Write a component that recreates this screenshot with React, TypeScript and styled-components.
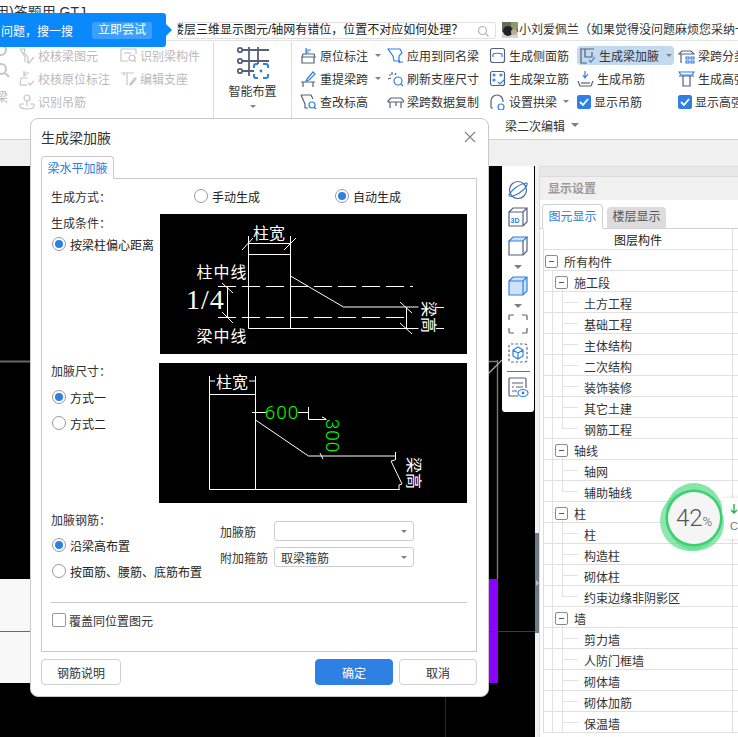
import React from "react";
import styled, { createGlobalStyle } from "styled-components";

const GlobalStyle = createGlobalStyle`
  html, body { margin: 0; padding: 0; background: #fff; }
  body { font-family: "Liberation Sans", "Noto Sans CJK SC", sans-serif; font-size: 12px; color: #333; }
`;

const Page = styled.div`
  position: relative;
  width: 738px;
  height: 737px;
  overflow: hidden;
  display: flex;
  flex-direction: column;
  background: #fff;
`;

/* ---------- top strip ---------- */
const TitleBar = styled.div`
  height: 13px;
  overflow: hidden;
  padding-top: 3px;
  box-sizing: border-box;
  font-size: 14px;
  line-height: 18px;
  white-space: nowrap;
  text-indent: -5px;
`;

const SearchStrip = styled.div`
  height: 27px;
  box-sizing: border-box;
  padding: 9px 0 0 177px;
  display: flex;
  align-items: flex-start;
  white-space: nowrap;
  overflow: hidden;
`;

const TipBubble = styled.div`
  position: absolute;
  left: 0;
  top: 13px;
  width: 166px;
  height: 34px;
  background: #0989fb;
  border-radius: 0 3px 3px 0;
  color: #fff;
  display: flex;
  align-items: center;
  z-index: 3;
  &::after {
    content: "";
    position: absolute;
    left: 166px;
    top: 11px;
    border-left: 6px solid #0989fb;
    border-top: 6px solid transparent;
    border-bottom: 6px solid transparent;
  }
`;

const TipText = styled.span`
  width: 92px;
  flex: none;
  padding-left: 1px;
  box-sizing: border-box;
`;

const TipButton = styled.span`
  width: 60px;
  height: 17px;
  line-height: 17px;
  text-align: center;
  background: rgba(255, 255, 255, 0.2);
  border-radius: 2px;
`;

const SearchBox = styled.div`
  width: 319px;
  height: 17px;
  flex: none;
  box-sizing: border-box;
  border: 1px solid #e0e0e0;
  border-radius: 2px;
  display: flex;
  align-items: center;
  justify-content: space-between;
  padding-right: 6px;
  overflow: hidden;
  color: #222;
`;

const SearchText = styled.span`
  margin-left: -6px;
  line-height: 15px;
`;

const Avatar = styled.svg`
  width: 16px;
  height: 16px;
  flex: none;
  margin-left: 6px;
`;

const NoticeText = styled.span`
  margin-left: 1px;
  line-height: 16px;
`;

/* ---------- ribbon ---------- */
const Ribbon = styled.div`
  height: 100px;
  box-sizing: border-box;
  border-top: 1px solid #e4e4e4;
  border-bottom: 1px solid #cfcfcf;
  display: flex;
  flex-direction: column;
`;

const RibbonTools = styled.div`
  height: 77px;
  display: flex;
  overflow: hidden;
`;

const ToolColumn = styled.div<{ $w: number; $ml?: number }>`
  width: ${(p) => p.$w}px;
  margin-left: ${(p) => p.$ml ?? 0}px;
  flex: none;
  padding-top: 3px;
  display: flex;
  flex-direction: column;
  white-space: nowrap;
`;

const Tool = styled.div<{ $muted?: boolean; $active?: boolean; $gap?: number }>`
  height: 23px;
  display: flex;
  align-items: center;
  gap: ${(p) => p.$gap ?? 3}px;
  color: ${(p) => (p.$muted ? "#b9b9b9" : "#333")};
  ${(p) =>
    p.$active &&
    `
    height: 19px;
    margin: 2px 4px 2px 0;
    background: #c3d9f0;
    border-radius: 4px;
    padding-left: 2px;
  `}
`;

const Caret = styled.i<{ $size?: number; $ml?: number; $mt?: number }>`
  display: block;
  flex: none;
  width: 0;
  height: 0;
  margin-left: ${(p) => p.$ml ?? 3}px;
  margin-top: ${(p) => p.$mt ?? 0}px;
  border-top: ${(p) => p.$size ?? 4}px solid #808080;
  border-left: ${(p) => p.$size ?? 4}px solid transparent;
  border-right: ${(p) => p.$size ?? 4}px solid transparent;
`;

const EdgeColumn = styled.div`
  width: 18px;
  flex: none;
  overflow: hidden;
  display: flex;
  flex-direction: column;
  align-items: flex-end;
  color: #b9b9b9;
`;

const EdgeLabel = styled.span`
  width: 18px;
  text-indent: -4px;
  margin-top: 1px;
`;

const RibbonDivider = styled.div`
  width: 1px;
  flex: none;
  background: #dcdcdc;
  margin-top: 1px;
`;

const BigTool = styled.div`
  width: 77px;
  flex: none;
  display: flex;
  flex-direction: column;
  align-items: center;
  padding-top: 5px;
  svg { margin-bottom: 3px; }
`;

const BigLabel = styled.span`
  line-height: 18px;
  margin-bottom: 4px;
`;

const Check = styled.span<{ $on?: boolean }>`
  width: 14px;
  height: 14px;
  box-sizing: border-box;
  flex: none;
  border-radius: 2px;
  background: ${(p) => (p.$on ? "#2f80e3" : "#fff")};
  border: 1px solid ${(p) => (p.$on ? "#2f80e3" : "#9a9a9a")};
  display: flex;
  align-items: center;
  justify-content: center;
`;

const GroupLabels = styled.div`
  height: 21px;
  box-sizing: border-box;
  padding: 0 0 7px 505px;
  display: flex;
  align-items: center;
`;

const Strip = styled.div`
  height: 26px;
  background: #f0f0f0;
`;

/* ---------- workspace ---------- */
const Workspace = styled.div`
  flex: 1;
  min-height: 0;
  display: flex;
`;

const Canvas = styled.div`
  position: relative;
  width: 535px;
  flex: none;
  background: #000;
  overflow: hidden;
`;

const CanvasDrawing = styled.svg`
  display: block;
`;

const ViewBar = styled.div`
  position: absolute;
  left: 502px;
  top: 0;
  width: 32px;
  height: 246px;
  box-sizing: border-box;
  background: #fff;
  border-radius: 0 0 3px 3px;
  padding-top: 13px;
  display: flex;
  flex-direction: column;
  align-items: center;
`;

const ViewIcon = styled.svg<{ $mt?: number }>`
  width: 22px;
  height: 22px;
  flex: none;
  margin-top: ${(p) => p.$mt ?? 0}px;
`;

const ViewRule = styled.div`
  width: 23px;
  height: 1px;
  background: #6a7280;
  margin: 7px 0 4px;
`;

const Splitter = styled.div`
  width: 4px;
  flex: none;
  background: #f2f2f2;
  padding-top: 367px;
`;

const SplitHandle = styled.div`
  height: 100px;
  background: #6d7b8a;
  display: flex;
  align-items: center;
  justify-content: center;
  &::after {
    content: "";
    border-left: 3px solid #b9c1ca;
    border-top: 3px solid transparent;
    border-bottom: 3px solid transparent;
  }
`;

const SidePanel = styled.div`
  position: relative;
  flex: 1;
  min-width: 0;
  border-left: 1px solid #dcdcdc;
  display: flex;
  flex-direction: column;
  overflow: hidden;
`;

const PanelCap = styled.div`
  height: 11px;
  flex: none;
  box-sizing: border-box;
  background: #e8e8e8;
  border-top: 1px solid #dcdcdc;
  border-bottom: 1px solid #dcdcdc;
`;

const PanelTitle = styled.div`
  height: 23px;
  flex: none;
  line-height: 24px;
  padding-left: 8px;
  background: #f0f0f0;
  color: #9a9a9a;
  font-weight: 700;
`;

const PanelTabs = styled.div`
  height: 29px;
  flex: none;
  box-sizing: border-box;
  padding: 3px 0 0 2px;
  display: flex;
  align-items: flex-end;
  gap: 4px;
  border-bottom: 1px solid #d0d0d8;
`;

const PanelTab = styled.div<{ $active?: boolean }>`
  width: ${(p) => (p.$active ? 61 : 59)}px;
  height: ${(p) => (p.$active ? 25 : 21)}px;
  margin-bottom: ${(p) => (p.$active ? -1 : 0)}px;
  box-sizing: border-box;
  text-align: center;
  line-height: ${(p) => (p.$active ? 24 : 21)}px;
  border-radius: 4px 4px 0 0;
  background: ${(p) => (p.$active ? "#fff" : "#dcdcdc")};
  border: ${(p) => (p.$active ? "1px solid #d0d0d8" : "none")};
  border-bottom: ${(p) => (p.$active ? "1px solid #fff" : "none")};
  color: ${(p) => (p.$active ? "#2b7de0" : "#555")};
`;

const TreeTable = styled.div`
  margin-left: 3px;
  border-left: 1px solid #dcdcdc;
`;

const TreeRow = styled.div`
  height: 21px;
  box-sizing: border-box;
  display: grid;
  grid-template-columns: 188px 1fr;
  border-bottom: 1px solid #e0e0e0;
`;

const TreeHead = styled.div`
  text-align: center;
  line-height: 24px;
  color: #222;
`;

const level2Lines = (last?: boolean) => `
  linear-gradient(#e2e2e2, #e2e2e2) 8px 0 / 1px 100% no-repeat,
  linear-gradient(#e2e2e2, #e2e2e2) 18px 0 / 1px ${last ? "50%" : "100%"} no-repeat,
  linear-gradient(#e2e2e2, #e2e2e2) 18px 10px / 16px 1px no-repeat
`;

const level1Lines = `
  linear-gradient(#e2e2e2, #e2e2e2) 8px 0 / 1px 100% no-repeat,
  linear-gradient(#e2e2e2, #e2e2e2) 18px 14px / 1px 7px no-repeat,
  linear-gradient(#e2e2e2, #e2e2e2) 8px 10px / 3px 1px no-repeat
`;

const TreeCell = styled.div<{ $level: number; $last?: boolean }>`
  display: flex;
  align-items: center;
  gap: 6px;
  color: #333;
  box-sizing: border-box;
  padding-top: 2px;
  white-space: nowrap;
  padding-left: ${(p) => [1, 11, 40][p.$level]}px;
  background: ${(p) => (p.$level === 2 ? level2Lines(p.$last) : p.$level === 1 ? level1Lines : "none")};
`;

const Fold = styled.span`
  width: 13px;
  height: 13px;
  box-sizing: border-box;
  flex: none;
  background: #fff;
  border: 1px solid #8a8a8a;
  border-radius: 2px;
  display: flex;
  align-items: center;
  justify-content: center;
  &::before {
    content: "";
    width: 5px;
    height: 1px;
    background: #555;
  }
`;

const TreeSide = styled.div`
  border-left: 1px solid #e0e0e0;
`;

const MeterWrap = styled.div`
  position: absolute;
  left: 118px;
  top: 317px;
  display: flex;
  align-items: center;
`;

const MeterBlob = styled.svg`
  position: relative;
  z-index: 1;
  flex: none;
`;

const MeterPill = styled.div`
  width: 22px;
  height: 41px;
  margin-left: -6px;
  padding-left: 8px;
  box-sizing: border-box;
  background: #fff;
  border-radius: 4px 0 0 4px;
  box-shadow: 0 0 5px rgba(0, 0, 0, 0.14);
  overflow: hidden;
  color: #777;
  line-height: 18px;
  font-size: 11px;
  white-space: nowrap;
`;

const PillArrow = styled.svg`
  display: block;
  margin: 6px 0 3px;
`;

/* ---------- dialog ---------- */
const Dialog = styled.div`
  position: absolute;
  left: 30px;
  top: 118px;
  width: 459px;
  height: 579px;
  box-sizing: border-box;
  padding: 0 11px 0 10px;
  background: #fff;
  border: 1px solid #c8c8c8;
  border-radius: 8px;
  z-index: 4;
`;

const DialogHead = styled.div`
  height: 37px;
  box-sizing: border-box;
  padding: 0 1px 2px 0;
  display: flex;
  align-items: center;
  justify-content: space-between;
  font-size: 14px;
  color: #333;
`;

const DialogTab = styled.div`
  width: 73px;
  height: 23px;
  box-sizing: border-box;
  margin-bottom: -1px;
  position: relative;
  text-align: center;
  line-height: 24px;
  color: #2b7de0;
  background: #fff;
  border: 1px solid #c8c8c8;
  border-bottom: 1px solid #fff;
  border-radius: 4px 4px 0 0;
`;

const DialogBody = styled.div`
  height: 474px;
  box-sizing: border-box;
  border: 1px solid #c8c8c8;
  padding: 7px 9px 0;
`;

const Line = styled.div`
  line-height: 20px;
  height: 18px;
  white-space: nowrap;
`;

const ModeRow = styled.div`
  height: 20px;
  display: flex;
  align-items: center;
`;

const ModeLabel = styled.div`
  width: 143px;
  flex: none;
`;

const ModeOption = styled.div`
  width: 141px;
  flex: none;
`;

const Section = styled.div<{ $mt: number }>`
  display: flex;
  margin-top: ${(p) => p.$mt}px;
`;

const SideColumn = styled.div<{ $w: number; $up?: number }>`
  width: ${(p) => p.$w}px;
  flex: none;
  margin-top: ${(p) => -(p.$up ?? 0)}px;
`;

const RadioRow = styled.label<{ $mt?: number; $nudge?: number }>`
  height: 20px;
  display: flex;
  align-items: center;
  gap: 4px;
  margin-top: ${(p) => p.$mt ?? 0}px;
  margin-left: ${(p) => p.$nudge ?? 0}px;
  white-space: nowrap;
  color: #222;
`;

const RadioDot = styled.span<{ $on?: boolean }>`
  width: 14px;
  height: 14px;
  box-sizing: border-box;
  flex: none;
  border-radius: 50%;
  border: 1px solid #999;
  background: #fff;
  display: flex;
  align-items: center;
  justify-content: center;
  &::after {
    content: "";
    width: 8px;
    height: 8px;
    border-radius: 50%;
    background: ${(p) => (p.$on ? "#2f80e3" : "transparent")};
  }
`;

const Diagram = styled.svg`
  display: block;
  flex: none;
  background: #000;
`;

const FieldGrid = styled.div`
  padding-top: 9px;
  display: grid;
  grid-template-columns: 54px 140px;
  align-content: start;
  row-gap: 6px;
  align-items: center;
`;

const SelectBox = styled.div`
  height: 20px;
  box-sizing: border-box;
  border: 1px solid #ccc;
  border-radius: 3px;
  padding: 0 6px;
  display: flex;
  align-items: center;
  justify-content: space-between;
  color: #333;
`;

const Rule = styled.div`
  height: 1px;
  background: #c8c8c8;
  margin-top: 21px;
`;

const CheckRow = styled.label`
  height: 20px;
  margin: 7px 0 0 1px;
  display: flex;
  align-items: center;
  gap: 3px;
`;

const DialogFoot = styled.div`
  margin-top: 7px;
  display: flex;
  align-items: center;
  gap: 6px;
`;

const FootButton = styled.button<{ $primary?: boolean; $wide?: boolean }>`
  height: 26px;
  width: ${(p) => (p.$wide ? 80 : 78)}px;
  margin-right: ${(p) => (p.$wide ? "auto" : "0")};
  box-sizing: border-box;
  padding: 0;
  font: inherit;
  border-radius: 4px;
  border: 1px solid ${(p) => (p.$primary ? "#2f80e3" : "#d0d0d0")};
  background: ${(p) => (p.$primary ? "#2f80e3" : "#fff")};
  color: ${(p) => (p.$primary ? "#fff" : "#333")};
`;

/* ---------- drawings ---------- */
const IconSvg = styled.svg<{ $muted?: boolean }>`
  width: 17px;
  height: 17px;
  flex: none;
  fill: none;
  stroke: ${(p) => (p.$muted ? "#c6c6c6" : "#56607a")};
  stroke-width: 1.2;
  .a { stroke: ${(p) => (p.$muted ? "#c6c6c6" : "#2f80e3")}; }
`;

const iconPaths: Record<string, React.ReactNode> = {
  checkBeam: (<><path d="M2 2h5l-1 4 4 4v6M2 2l5 8v5" /><path d="M9 14l2 2 5-6" /></>),
  recognize: (<><path d="M1 2h15v5M1 2v12h7" /><path d="M4 6h7" /><circle cx="12" cy="11" r="3" /><path d="M14 13l2 2" /></>),
  checkMark: (<><path d="M6 1v6M6 3h5M6 5h3" /><path d="M2 15l1-7h7" /><path d="M2 15h7" /><path d="M10 13l2 2 4-4" /></>),
  editSeat: (<><path d="M1 3h13M4 3v3M7 3v12" /><path d="M10 14l5-6 1 1-5 6h-1z" /></>),
  hook: (<><circle cx="9" cy="5" r="3" /><path d="M2 11v2c0 2 2 3 7 3s7-1 7-3v-2M9 8v5M2 11h4M12 11h4" /></>),
  mark: (<><path className="a" d="M6 1v6M6 3h5M6 5h3" /><path d="M3 7h11l1 3H2zM2 10v6h12v-6" /></>),
  repick: (<><path className="a" d="M7 9l6-7 2 2-6 6-3 1z" /><path d="M1 12h14M3 12v5M13 12v5" /></>),
  level: (<><path d="M1 2h10l2 4M1 2l4 9v4h3" /><circle className="a" cx="12" cy="12" r="3" /><path className="a" d="M14 14l2 2" /></>),
  sameName: (<><path className="a" d="M1 2h12l2 4-3 3v5H7L6 9 1 2z" /><path className="a" d="M11 15h5M12 13l1 3" /></>),
  refresh: (<><path d="M5 2v3M2 5h2M1 9l3-1M9 3l-1 2" /><circle className="a" cx="11" cy="11" r="4" /><path className="a" d="M14 14l2 2" /></>),
  copySpan: (<><path d="M1 8l3-3h10l3 3v1H1zM3 9v6M14 9v6M9 9v4" /></>),
  sideBar: (<><rect x="1.5" y="1.5" width="14" height="14" rx="2" /><path className="a" d="M4 7c1-1 8-1 9 0M4 7v3M13 7v3" /></>),
  erect: (<><rect x="1.5" y="1.5" width="14" height="14" rx="2" /><circle className="a" cx="5" cy="5" r="1" /><circle className="a" cx="12" cy="5" r="1" /><circle className="a" cx="5" cy="10" r="1" /><path className="a" d="M9 12l2 2 5-5" /></>),
  arch: (<><path d="M2 15V8a6 6 0 0 1 12 0v1M2 15h2" /><circle className="a" cx="12" cy="14" r="3" /></>),
  haunch: (<><path d="M1 2h14M2 2v14h6M6 2v8l7 0V5" /><path className="a" d="M10 13l2 2 4-5" /></>),
  hanger: (<><path d="M1 11l2 5h11l2-5" /><path className="a" d="M8 1v7M6 5l2 3 3-4" /><path d="M4 13h9" /></>),
  spanSort: (<><path d="M1 7l3-3h9l3 3H1zM3 7v9" /><path className="a" d="M8 10h3v2H8zM13 10h3v2h-3zM8 14h3v2H8zM13 14h3v2h-3z" /></>),
  highBar: (<><path className="a" d="M1 2h15l-2 3H3z" /><path d="M1 6h15M5 6v10h7V6" /></>),
};

const Icon = ({ name, muted }: { name: string; muted?: boolean }) => (
  <IconSvg viewBox="0 0 17 17" $muted={muted}>
    {iconPaths[name]}
  </IconSvg>
);

const Tick = () => (
  <svg width="10" height="10" viewBox="0 0 10 10" fill="none" stroke="#fff" strokeWidth="1.8">
    <path d="M1 5l3 3 5-6" />
  </svg>
);

const SmartIcon = () => (
  <svg width="34" height="34" viewBox="0 0 34 34" fill="none" stroke="#56607a" strokeWidth="1.8">
    <path d="M13 1v29M22 1v17M6 4h27M6 15h27M6 25h12" />
    <circle cx="4" cy="4" r="2.2" />
    <circle cx="4" cy="15" r="2.2" />
    <circle cx="4" cy="25" r="2.2" />
    <path stroke="#2f80e3" strokeWidth="2" d="M18 22v-2a2 2 0 0 1 2-2h2M27 18h3a2 2 0 0 1 2 2v2M32 28v2a2 2 0 0 1-2 2h-3M22 32h-2a2 2 0 0 1-2-2v-2" />
    <circle cx="25" cy="25" r="1.4" fill="#2f80e3" stroke="none" />
  </svg>
);

const CadLabel = ({ x, y, size = 16, fill = "#fff", rotate, spacing, thin, children }: { x: number; y: number; size?: number; fill?: string; rotate?: number; spacing?: number; thin?: boolean; children: React.ReactNode }) => (
  <text
    x={x}
    y={y}
    fontSize={size}
    fill={fill}
    letterSpacing={spacing}
    fontFamily={thin ? "Roboto, sans-serif" : undefined}
    fontWeight={thin ? 300 : undefined}
    textAnchor="middle"
    dominantBaseline="central"
    transform={rotate ? `rotate(${rotate} ${x} ${y})` : undefined}
  >
    {children}
  </text>
);

const HaunchByOffset = () => (
  <Diagram width="307" height="140" viewBox="0 0 307 140">
    <g fill="none" stroke="#fff" strokeWidth="1">
      <path d="M88.5 22v92.5M130.5 22v92.5M88.5 40.5h42M88.5 29.5h42M82 36l11-12M124 36l12-12" />
      <path strokeDasharray="18 6" d="M58 72.5h195M58 103.5h190" />
      <path d="M67.5 72v31M62 69l11 10M62 98l11 11" />
      <path d="M130.5 62l53 31h75M276 93.5h8M88.5 114.5h170M276 114.5h8M246.5 93v21M240 88l12 11M240 109l12 11" />
    </g>
    <CadLabel x={109} y={19}>柱宽</CadLabel>
    <CadLabel x={62} y={58} spacing={1}>柱中线</CadLabel>
    <text x="26" y="95" fontSize="28" letterSpacing="1" fill="#fff" fontFamily="Liberation Serif, serif">1/4</text>
    <CadLabel x={62} y={122} spacing={1}>梁中线</CadLabel>
    <CadLabel x={268} y={103} size={16} rotate={90}>梁高</CadLabel>
  </Diagram>
);

const HaunchBySize = () => (
  <Diagram width="308" height="140" viewBox="0 0 308 140">
    <g fill="none" stroke="#fff" strokeWidth="1">
      <path d="M50.5 13v113.5M96.5 13v113.5M50.5 31.5h46M50.5 126.5h190M50 18h6M90 18h6" />
      <path d="M93 49.5h14M139 49.5h10M149.5 44v12.5h18M163 54l4 2" />
      <path d="M96.5 57l53 36h87M236.5 89v8M236 97l-4 1 11 23-3 1v5M161 90l3 6" />
    </g>
    <CadLabel x={73} y={19}>柱宽</CadLabel>
    <CadLabel x={123} y={49} size={19} fill="#00ff00" thin spacing={1}>600</CadLabel>
    <CadLabel x={173} y={73} size={19} fill="#00ff00" rotate={90} thin spacing={1}>300</CadLabel>
    <CadLabel x={254} y={110} size={16} rotate={90}>梁高</CadLabel>
  </Diagram>
);

const layerTree: { text: string; level: number; last?: boolean }[] = [
  { text: "所有构件", level: 0 },
  { text: "施工段", level: 1 },
  { text: "土方工程", level: 2 },
  { text: "基础工程", level: 2 },
  { text: "主体结构", level: 2 },
  { text: "二次结构", level: 2 },
  { text: "装饰装修", level: 2 },
  { text: "其它土建", level: 2 },
  { text: "钢筋工程", level: 2, last: true },
  { text: "轴线", level: 1 },
  { text: "轴网", level: 2 },
  { text: "辅助轴线", level: 2, last: true },
  { text: "柱", level: 1 },
  { text: "柱", level: 2 },
  { text: "构造柱", level: 2 },
  { text: "砌体柱", level: 2 },
  { text: "约束边缘非阴影区", level: 2, last: true },
  { text: "墙", level: 1 },
  { text: "剪力墙", level: 2 },
  { text: "人防门框墙", level: 2 },
  { text: "砌体墙", level: 2 },
  { text: "砌体加筋", level: 2 },
  { text: "保温墙", level: 2 },
];

const dark = { fill: "none", stroke: "#56607a", strokeWidth: 1.2 };
const blue = { fill: "none", stroke: "#2f80e3", strokeWidth: 1.2 };

export default function App() {
  return (
    <Page>
      <GlobalStyle />
      <TitleBar>用)答题用 GTJ</TitleBar>
      <SearchStrip>
        <SearchBox>
          <SearchText>楼层三维显示图元/轴网有错位，位置不对应如何处理？</SearchText>
          <svg width="12" height="12" viewBox="0 0 12 12" fill="none" stroke="#b5b5b5" strokeWidth="1.2">
            <circle cx="5.5" cy="5.5" r="4" />
            <path d="M8.5 8.5l3 3" />
          </svg>
        </SearchBox>
        <Avatar viewBox="0 0 16 16">
          <rect width="16" height="16" fill="#5f6f58" />
          <rect x="9" width="7" height="7" fill="#8b9a6c" />
          <rect y="10" width="16" height="6" fill="#cfd6d2" />
          <circle cx="6" cy="9" r="5" fill="#1d2226" />
          <circle cx="12" cy="10" r="3" fill="#c9a68c" />
        </Avatar>
        <NoticeText>小刘爱佩兰（如果觉得没问题麻烦您采纳一下</NoticeText>
      </SearchStrip>
      <TipBubble>
        <TipText>问题，搜一搜</TipText>
        <TipButton>立即尝试</TipButton>
      </TipBubble>

      <Ribbon>
        <RibbonTools>
          <EdgeColumn>
            <svg width="18" height="46" viewBox="0 0 18 46" fill="none" stroke="#c6c6c6" strokeWidth="2">
              <circle cx="1" cy="9" r="5" />
              <circle cx="1" cy="28" r="5" />
              <path d="M5 32l4 4" />
            </svg>
            <EdgeLabel>梁</EdgeLabel>
          </EdgeColumn>
          <ToolColumn $w={102}>
            <Tool $muted><Icon name="checkBeam" muted />校核梁图元</Tool>
            <Tool $muted><Icon name="checkMark" muted />校核原位标注</Tool>
            <Tool $muted><Icon name="hook" muted />识别吊筋</Tool>
          </ToolColumn>
          <ToolColumn $w={93}>
            <Tool $muted><Icon name="recognize" muted />识别梁构件</Tool>
            <Tool $muted><Icon name="editSeat" muted />编辑支座</Tool>
          </ToolColumn>
          <RibbonDivider />
          <BigTool>
            <SmartIcon />
            <BigLabel>智能布置</BigLabel>
            <Caret $ml={0} $size={3} />
          </BigTool>
          <RibbonDivider />
          <ToolColumn $w={87} $ml={8}>
            <Tool><Icon name="mark" />原位标注<Caret $size={3} $ml={4} /></Tool>
            <Tool><Icon name="repick" />重提梁跨<Caret $size={3} $ml={4} /></Tool>
            <Tool><Icon name="level" />查改标高</Tool>
          </ToolColumn>
          <ToolColumn $w={102}>
            <Tool><Icon name="sameName" />应用到同名梁</Tool>
            <Tool><Icon name="refresh" />刷新支座尺寸</Tool>
            <Tool><Icon name="copySpan" />梁跨数据复制</Tool>
          </ToolColumn>
          <ToolColumn $w={88}>
            <Tool><Icon name="sideBar" />生成侧面筋</Tool>
            <Tool><Icon name="erect" />生成架立筋</Tool>
            <Tool><Icon name="arch" />设置拱梁<Caret $size={3} /></Tool>
          </ToolColumn>
          <ToolColumn $w={101}>
            <Tool $active><Icon name="haunch" />生成梁加腋<Caret $size={3} $ml={4} /></Tool>
            <Tool><Icon name="hanger" />生成吊筋</Tool>
            <Tool><Check $on><Tick /></Check>显示吊筋</Tool>
          </ToolColumn>
          <ToolColumn $w={70}>
            <Tool><Icon name="spanSort" />梁跨分类</Tool>
            <Tool><Icon name="highBar" />生成高强</Tool>
            <Tool><Check $on><Tick /></Check>显示高强</Tool>
          </ToolColumn>
        </RibbonTools>
        <GroupLabels>
          梁二次编辑<Caret $ml={6} />
        </GroupLabels>
      </Ribbon>
      <Strip />

      <Workspace>
        <Canvas>
          <CanvasDrawing width="535" height="571" viewBox="0 0 535 571">
            <rect y="194.5" width="30" height="2" fill="#666" />
            <rect y="413" width="30" height="104" fill="#f8f8f8" />
            <path d="M0 465.5h30" stroke="#ff2a2a" />
            <rect x="488" y="413" width="10" height="104" fill="#8c00ff" />
            <path d="M497.5 194v219M488 195.5h10" stroke="#777" strokeWidth="1.4" />
            <path d="M488 208l14-14" stroke="#aaa" strokeWidth="1.2" />
            <path d="M488 465.5h47" stroke="#c80000" />
            <path d="M445.5 530v41" stroke="#8b0000" />
          </CanvasDrawing>
          <ViewBar>
            <ViewIcon viewBox="0 0 22 22">
              <ellipse cx="11" cy="11" rx="8.5" ry="8.5" {...dark} />
              <path d="M2 16C5 10 14 4 20 4c1 3-5 10-14 13-2 .6-4 .4-4-1z" {...blue} />
            </ViewIcon>
            <ViewIcon viewBox="0 0 22 22" $mt={5}>
              <path d="M2 6l4-4h14v14l-4 4H2zM2 6h14v14M16 6l4-4" {...dark} />
              <text x="3.5" y="17" fontSize="7" fontWeight="700" fill="#2f80e3">3D</text>
            </ViewIcon>
            <ViewIcon viewBox="0 0 22 22" $mt={7}>
              <path d="M2 6l4-4h14l-4 4z" fill="#cfe2f8" stroke="#2f80e3" strokeWidth="1.2" />
              <path d="M2 6v14h14V6M16 20l4-4V2" {...dark} />
            </ViewIcon>
            <Caret $ml={0} $size={4} $mt={8} />
            <ViewIcon viewBox="0 0 22 22" $mt={6}>
              <path d="M2 6l4-4h14v14l-4 4H2zM2 6h14v14M16 6l4-4" fill="#cfe2f8" stroke="#2f80e3" strokeWidth="1.2" />
            </ViewIcon>
            <Caret $ml={0} $size={4} $mt={7} />
            <ViewIcon viewBox="0 0 22 22" $mt={5}>
              <path d="M7 2H3a1 1 0 0 0-1 1v4M15 2h4a1 1 0 0 1 1 1v4M2 15v4a1 1 0 0 0 1 1h4M20 15v4a1 1 0 0 1-1 1h-4" {...dark} />
            </ViewIcon>
            <ViewIcon viewBox="0 0 22 22" $mt={7}>
              <rect x="2" y="2" width="18" height="18" rx="2" {...dark} strokeDasharray="2.5 2" />
              <path d="M11 5l5 3v6l-5 3-5-3V8zM6 8l5 3 5-3M11 11v6" {...blue} />
            </ViewIcon>
            <ViewRule />
            <ViewIcon viewBox="0 0 22 22">
              <path d="M11 20H3a1 1 0 0 1-1-1V3a1 1 0 0 1 1-1h15a1 1 0 0 1 1 1v9" {...dark} />
              <path d="M5 7h11M5 11h2M9 11h7M5 15h5" {...dark} />
              <ellipse cx="16" cy="17" rx="5" ry="3.5" {...blue} />
              <circle cx="16" cy="17" r="1.4" fill="#2f80e3" />
            </ViewIcon>
          </ViewBar>
        </Canvas>
        <Splitter>
          <SplitHandle />
        </Splitter>
        <SidePanel>
          <PanelCap />
          <PanelTitle>显示设置</PanelTitle>
          <PanelTabs>
            <PanelTab $active>图元显示</PanelTab>
            <PanelTab>楼层显示</PanelTab>
          </PanelTabs>
          <TreeTable>
            <TreeRow>
              <TreeHead>图层构件</TreeHead>
              <TreeSide />
            </TreeRow>
            {layerTree.map((row, i) => (
              <TreeRow key={i}>
                <TreeCell $level={row.level} $last={row.last}>
                  {row.level < 2 && <Fold />}
                  {row.text}
                </TreeCell>
                <TreeSide />
              </TreeRow>
            ))}
          </TreeTable>
          <MeterWrap>
            <MeterBlob width="70" height="70" viewBox="0 0 70 70">
              <circle cx="36" cy="28" r="28" fill="#5fdc8c" opacity="0.75" />
              <circle cx="32" cy="38" r="30" fill="#5fdc8c" opacity="0.7" />
              <circle cx="38" cy="40" r="28" fill="#5fdc8c" opacity="0.7" />
              <circle cx="36" cy="35" r="28.5" fill="#3ad070" />
              <circle cx="36" cy="35" r="26" fill="#f5f5f5" />
              <text x="36" y="43" textAnchor="middle" fontSize="24" fontWeight="300" fill="#555" fontFamily="Roboto, sans-serif">
                42<tspan fontSize="13">%</tspan>
              </text>
            </MeterBlob>
            <MeterPill>
              <PillArrow width="8" height="10" viewBox="0 0 8 10" fill="none" stroke="#22b14c" strokeWidth="1.4">
                <path d="M4 0v9M1 6l3 3 3-3" />
              </PillArrow>
              Cl
            </MeterPill>
          </MeterWrap>
        </SidePanel>
      </Workspace>

      <Dialog>
        <DialogHead>
          生成梁加腋
          <svg width="12" height="12" viewBox="0 0 12 12" stroke="#808080" strokeWidth="1.1">
            <path d="M1 1l10 10M11 1L1 11" />
          </svg>
        </DialogHead>
        <DialogTab>梁水平加腋</DialogTab>
        <DialogBody>
          <ModeRow>
            <ModeLabel>生成方式：</ModeLabel>
            <ModeOption>
              <RadioRow><RadioDot />手动生成</RadioRow>
            </ModeOption>
            <RadioRow><RadioDot $on />自动生成</RadioRow>
          </ModeRow>
          <Section $mt={8}>
            <SideColumn $w={109}>
              <Line>生成条件：</Line>
              <RadioRow $mt={2} $nudge={1}><RadioDot $on />按梁柱偏心距离</RadioRow>
            </SideColumn>
            <HaunchByOffset />
          </Section>
          <Section $mt={9}>
            <SideColumn $w={108} $up={1}>
              <Line>加腋尺寸：</Line>
              <RadioRow $mt={7} $nudge={1}><RadioDot $on />方式一</RadioRow>
              <RadioRow $mt={6} $nudge={1}><RadioDot />方式二</RadioRow>
            </SideColumn>
            <HaunchBySize />
          </Section>
          <Section $mt={9}>
            <SideColumn $w={169} $up={1}>
              <Line>加腋钢筋：</Line>
              <RadioRow $mt={6} $nudge={1}><RadioDot $on />沿梁高布置</RadioRow>
              <RadioRow $mt={6} $nudge={1}><RadioDot />按面筋、腰筋、底筋布置</RadioRow>
            </SideColumn>
            <FieldGrid>
              <span>加腋筋</span>
              <SelectBox><span /><Caret $size={3} /></SelectBox>
              <span>附加箍筋</span>
              <SelectBox>取梁箍筋<Caret $size={3} /></SelectBox>
            </FieldGrid>
          </Section>
          <Rule />
          <CheckRow><Check />覆盖同位置图元</CheckRow>
        </DialogBody>
        <DialogFoot>
          <FootButton $wide>钢筋说明</FootButton>
          <FootButton $primary>确定</FootButton>
          <FootButton>取消</FootButton>
        </DialogFoot>
      </Dialog>
    </Page>
  );
}
